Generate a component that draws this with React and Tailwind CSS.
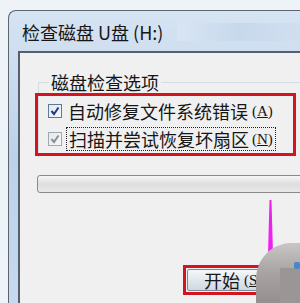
import React from "react";

export default function App() {
  return (
    <div
      className="relative w-[300px] h-[303px] overflow-hidden bg-[#eef3f8] pt-[10px] pl-[8px] text-[#161616]"
      style={{ fontFamily: '"Noto Sans CJK SC", "Noto Sans", sans-serif' }}
    >
      {/* window frame */}
      <div className="h-[293px] rounded-tl-[8px] border-l border-t border-[#5c646e] bg-gradient-to-b from-[#d6e4f3] via-[#bcd1e9] to-[#c6d9ee] pl-[9px] flex flex-col">
        <div className="h-[40px] flex items-center pl-[4px] pt-[2px] text-[18px] leading-none">
          <span>检查磁盘 U盘 (H:)</span>
          <div className="ml-[14px] flex-1 h-[18px] bg-gradient-to-r from-[#dbe7f4] via-[#c3d5ea] to-[#cfdeef] opacity-70" />
        </div>

        {/* client area */}
        <div className="flex-1 bg-[#f0f0f0] border-l-2 border-t-2 border-[#56606c] flex flex-col">
          <fieldset className="mt-[19px] ml-[18px] border-t border-l border-[#d3dce3] pb-[2px]">
            <legend className="ml-[10px] px-[2px] text-[18px] leading-[20px]">磁盘检查选项</legend>

            <div className="-ml-[4px] mt-[1px] w-[261px] border-[3px] border-[#d3141f] pt-[3px] pb-[2px] pl-[10px] flex flex-col gap-[4px]">
              <div className="h-[24px] flex items-center">
                <Checkbox active />
                <span className="ml-[6px] text-[18px] leading-none">自动修复文件系统错误</span>
                <span className="ml-[4px] text-[15px] leading-none" style={{ fontFamily: '"Liberation Serif", serif' }}>
                  (<span className="underline">A</span>)
                </span>
              </div>
              <div className="h-[24px] flex items-center">
                <Checkbox />
                <span className="ml-[4px] h-[24px] pl-[2px] pr-[2px] flex items-center border border-dotted border-[#222]">
                  <span className="text-[18px] leading-none">扫描并尝试恢复坏扇区</span>
                  <span className="ml-[3px] text-[15px] leading-none" style={{ fontFamily: '"Liberation Serif", serif' }}>
                    (<span className="underline">N</span>)
                  </span>
                </span>
              </div>
            </div>
          </fieldset>

          {/* progress bar */}
          <div className="mt-[17px] ml-[17px] -mr-[10px] h-[18px] rounded-[3px] border border-[#8a8a8a] bg-gradient-to-b from-[#f6f6f6] via-[#dedede] to-[#e8e8e8]" />

          {/* start button */}
          <div className="mt-[72px] ml-[163px] w-[100px] border-[3px] border-[#d3141f] p-[1px]">
            <div className="h-[22px] rounded-[2px] border border-[#7d8a96] bg-gradient-to-b from-[#f4f7f9] to-[#cfd9e1] flex items-center pl-[16px] text-[18px] leading-none">
              开始
              <span className="ml-[4px] text-[15px]" style={{ fontFamily: '"Liberation Serif", serif' }}>
                (<span className="underline">S</span>)
              </span>
            </div>
          </div>
        </div>
      </div>

      {/* annotation arrow */}
      <svg className="absolute left-[255px] top-[196px]" width="32" height="104" viewBox="0 0 32 104">
        <polygon points="14.5,4 16.5,4 18.5,76 12.5,76" fill="#ee22ee" />
        <polygon points="5,72 27,72 16,98" fill="#ee22ee" />
      </svg>

      {/* cursor / avatar blob */}
      <svg className="absolute left-[250px] top-[238px]" width="50" height="65" viewBox="0 0 50 65">
        <defs>
          <linearGradient id="blob" x1="0" y1="0" x2="0" y2="1">
            <stop offset="0" stopColor="#c9c6c6" />
            <stop offset="0.5" stopColor="#a8a2a2" />
            <stop offset="1" stopColor="#958f90" />
          </linearGradient>
        </defs>
        <path d="M6,65 L6,42 C6,20 22,6 40,5 L50,5 L50,65 Z" fill="url(#blob)" />
        <rect x="30" y="30" width="20" height="35" fill="#9b9696" />
        <rect x="44" y="24" width="6" height="7" rx="2" fill="#4a86c8" />
      </svg>
    </div>
  );
}

function Checkbox({ active }) {
  return (
    <div
      className={
        "w-[14px] h-[14px] border flex items-center justify-center " +
        (active
          ? "border-[#5e7a96] bg-gradient-to-br from-[#dfe8f1] to-[#f7f9fb]"
          : "border-[#a0a8b0] bg-gradient-to-br from-[#e6e9ec] to-[#f6f7f8]")
      }
    >
      <svg width="10" height="10" viewBox="0 0 10 10">
        <path
          d="M1.5,5 L4,8 L8.5,1.5"
          fill="none"
          stroke={active ? "#1c3b8a" : "#8a8f96"}
          strokeWidth="2"
        />
      </svg>
    </div>
  );
}
